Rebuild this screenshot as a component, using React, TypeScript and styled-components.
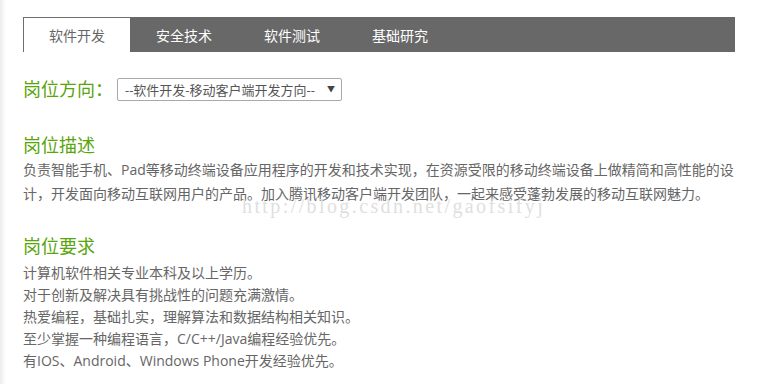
import React from 'react';
import styled, {createGlobalStyle} from 'styled-components';

const GlobalStyle = createGlobalStyle`
  html, body {
    margin: 0;
    padding: 0;
  }
  body {
    background: linear-gradient(to right, #ececec 0, #f6f6f6 3px, #fff 6px);
    font-family: "Open Sans", "Noto Sans CJK SC", sans-serif;
    color: #666;
  }
`;

const tabs = ['软件开发', '安全技术', '软件测试', '基础研究'];

const requirements = [
  '计算机软件相关专业本科及以上学历。',
  '对于创新及解决具有挑战性的问题充满激情。',
  '热爱编程，基础扎实，理解算法和数据结构相关知识。',
  '至少掌握一种编程语言，C/C++/Java编程经验优先。',
  '有IOS、Android、Windows Phone开发经验优先。',
];

const App: React.FC = () => {
  return (
    <>
      <GlobalStyle />
      <Page>
        <TabBar>
          {tabs.map((t, i) => (
            <Tab key={t} $active={i === 0}>{t}</Tab>
          ))}
        </TabBar>

        <FilterRow>
          <FilterLabel>岗位方向：</FilterLabel>
          <SelectWrap>
            <Select defaultValue="mobile">
              <option value="mobile">--软件开发-移动客户端开发方向--</option>
            </Select>
            <Arrow>▼</Arrow>
          </SelectWrap>
        </FilterRow>

        <Section>
          <Heading>岗位描述</Heading>
          <Paragraph>
            负责智能手机、Pad等移动终端设备应用程序的开发和技术实现，在资源受限的移动终端设备上做精简和高性能的设
            <br />
            计，开发面向移动互联网用户的产品。加入腾讯移动客户端开发团队，一起来感受蓬勃发展的移动互联网魅力。
          </Paragraph>
          <Watermark>http://blog.csdn.net/gaofsifyj</Watermark>
        </Section>

        <Section $gap={28}>
          <Heading>岗位要求</Heading>
          <List>
            {requirements.map((r) => (
              <li key={r}>{r}</li>
            ))}
          </List>
        </Section>
      </Page>
    </>
  );
};

const Page = styled.div`
  width: 712px;
  padding: 17px 28px 0 23px;
`;

const TabBar = styled.ul`
  display: flex;
  margin: 0;
  padding: 0;
  list-style: none;
  height: 35px;
  background-color: #686868;
`;

const Tab = styled.li<{$active?: boolean}>`
  width: 107px;
  box-sizing: border-box;
  display: flex;
  align-items: center;
  justify-content: center;
  font-size: 14px;
  color: ${(p) => (p.$active ? '#666' : '#fff')};
  background-color: ${(p) => (p.$active ? '#fff' : 'transparent')};
  border-top: ${(p) => (p.$active ? '1px solid #6e6e6e' : 'none')};
  border-left: ${(p) => (p.$active ? '1px solid #6e6e6e' : 'none')};
  & + & {
    width: 108px;
  }
`;

const FilterRow = styled.div`
  display: flex;
  align-items: center;
  gap: 4px;
  margin-top: 25px;
  height: 24px;
`;

const FilterLabel = styled.span`
  font-size: 18px;
  color: #59a50c;
  line-height: 24px;
`;

const SelectWrap = styled.div`
  position: relative;
  width: 225px;
  height: 23px;
`;

const Select = styled.select`
  appearance: none;
  width: 100%;
  height: 100%;
  box-sizing: border-box;
  border: 1px solid #a9a9a9;
  border-radius: 2px;
  background: #fff;
  padding: 0 0 0 7px;
  font-family: "Open Sans", "Noto Sans CJK SC", sans-serif;
  font-size: 13px;
  color: #555;
  outline: none;
`;

const Arrow = styled.span`
  position: absolute;
  right: 7px;
  top: 5px;
  font-size: 8px;
  color: #444;
  pointer-events: none;
`;

const Section = styled.section<{$gap?: number}>`
  position: relative;
  margin-top: ${(p) => p.$gap ?? 32}px;
`;

const Heading = styled.h2`
  margin: 0;
  font-size: 18px;
  font-weight: normal;
  line-height: 24px;
  color: #59a50c;
`;

const Paragraph = styled.p`
  margin: 1px 0 0;
  font-size: 14px;
  line-height: 24px;
  white-space: nowrap;
`;

const Watermark = styled.span`
  position: absolute;
  left: 219px;
  top: 62px;
  font-family: "Liberation Serif", serif;
  font-size: 20px;
  letter-spacing: 2.4px;
  color: #e0e0e0;
  pointer-events: none;
`;

const List = styled.ul`
  margin: 4px 0 0;
  padding: 0;
  list-style: none;
  font-size: 14px;
  line-height: 22px;
`;

export default App;
